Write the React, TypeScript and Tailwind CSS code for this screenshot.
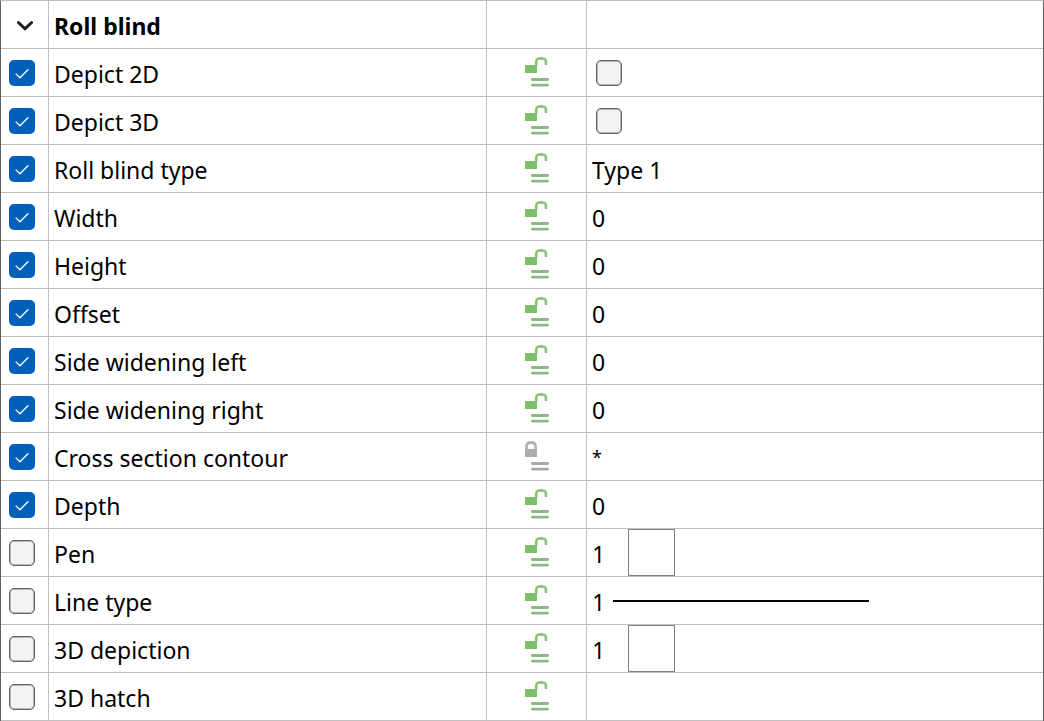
import { useState, type ReactNode } from "react";

type Property = {
    name: string;
    enabled: boolean;
    locked?: boolean;
    value: ReactNode;
};

function Checkbox({ label, defaultChecked = false }: { label: string; defaultChecked?: boolean }) {
    return (
        <span className="relative block size-[26px]">
            <input
                type="checkbox"
                aria-label={label}
                defaultChecked={defaultChecked}
                className="peer block size-full appearance-none rounded-[5px] border border-[#606060] bg-[#f3f3f3] ring-1 ring-[#606060]/40 ring-inset checked:border-0 checked:bg-[#005fb8] checked:ring-0"
            />
            <svg
                viewBox="0 0 26 26"
                className="pointer-events-none absolute inset-0 hidden peer-checked:block"
                fill="none"
                stroke="#fff"
                strokeWidth="1.3"
            >
                <path d="M6.6 13.6 11 17.8 19.4 9.3" />
            </svg>
        </span>
    );
}

function LockIcon({ locked = false }: { locked?: boolean }) {
    const lines = locked ? "#a8a8a8" : "#91b587";

    return (
        <svg width="24" height="30" viewBox="0 0 24 30" fill="none" className="block">
            {locked ? (
                <>
                    <path d="M1.5 9V5Q1.5 1.5 6 1.5T10.5 5V9" stroke="#b4b4b4" strokeWidth="2.8" />
                    <path d="M0 8h12v8H0z" fill="#acacac" />
                </>
            ) : (
                <>
                    <path d="M0 8h12v8H0z" fill="#7dc268" />
                    <path d="M11.2 9V4.5Q11.2 1.4 16 1.4" stroke="#83c470" strokeWidth="2.6" />
                    <path d="M15.5 1.4Q20.9 1.4 20.9 4.5V8" stroke="#96bd8b" strokeWidth="2.6" />
                </>
            )}
            <path d="M7.4 22.5h15.2M7.4 28.2h15.2" stroke={lines} strokeWidth="2.8" strokeLinecap="round" />
        </svg>
    );
}

function Swatch() {
    return <span className="ml-[23px] size-[47px] border border-[#808080] bg-white" />;
}

const properties: Property[] = [
    { name: "Depict 2D", enabled: true, value: <Checkbox label="Depict 2D value" /> },
    { name: "Depict 3D", enabled: true, value: <Checkbox label="Depict 3D value" /> },
    { name: "Roll blind type", enabled: true, value: "Type 1" },
    { name: "Width", enabled: true, value: "0" },
    { name: "Height", enabled: true, value: "0" },
    { name: "Offset", enabled: true, value: "0" },
    { name: "Side widening left", enabled: true, value: "0" },
    { name: "Side widening right", enabled: true, value: "0" },
    { name: "Cross section contour", enabled: true, locked: true, value: <span className="text-lg">*</span> },
    { name: "Depth", enabled: true, value: "0" },
    { name: "Pen", enabled: false, value: <><span className="pt-0.5">1</span><Swatch /></> },
    {
        name: "Line type",
        enabled: false,
        value: (
            <>
                <span className="pt-0.5">1</span>
                <span className="ml-2 h-0.5 w-64 bg-black" />
            </>
        ),
    },
    { name: "3D depiction", enabled: false, value: <><span className="pt-0.5">1</span><Swatch /></> },
    { name: "3D hatch", enabled: false, value: "" },
];

const cell = "border-b border-r border-[#c0c0c0] p-0";
const lastCell = "border-b border-[#c0c0c0] p-0";

export default function App() {
    const [open, setOpen] = useState(true);

    return (
        <table className="w-full table-fixed border-separate border-spacing-0 border-x border-t border-x-[#606060] border-t-[#c0c0c0] bg-white text-left font-['Noto_Sans',sans-serif] text-[23px] leading-8 text-black">
            <colgroup>
                <col className="w-12" />
                <col className="w-[438px]" />
                <col className="w-[100px]" />
                <col />
            </colgroup>
            <thead>
                <tr className="h-12">
                    <th className={cell}>
                        <button
                            aria-label="Toggle Roll blind"
                            aria-expanded={open}
                            onClick={() => setOpen(!open)}
                            className="flex h-[47px] w-full items-center justify-center pt-0.5"
                        >
                            <svg width="18" height="12" viewBox="0 0 18 12" fill="none" className={open ? "" : "-rotate-90"}>
                                <path d="M2.4 2.5 9 8.8 15.6 2.5" stroke="#1c1c1c" strokeWidth="3" strokeLinecap="round" />
                            </svg>
                        </button>
                    </th>
                    <th scope="col" className={cell}>
                        <div className="pt-0.5 pl-[5px] font-bold">Roll blind</div>
                    </th>
                    <td className={cell} />
                    <td className={lastCell} />
                </tr>
            </thead>
            {open && (
                <tbody>
                    {properties.map(({ name, enabled, locked, value }) => (
                        <tr key={name} className="h-12">
                            <td className={cell}>
                                <div className="pl-2">
                                    <Checkbox label={name} defaultChecked={enabled} />
                                </div>
                            </td>
                            <th scope="row" className={cell}>
                                <div className="pt-0.5 pl-[5px] font-normal">{name}</div>
                            </th>
                            <td className={cell}>
                                <div className="flex justify-center pb-0.5">
                                    <LockIcon locked={locked} />
                                </div>
                            </td>
                            <td className={lastCell}>
                                {typeof value === "string" ? (
                                    <div className="pt-0.5 pl-[5px]">{value}</div>
                                ) : (
                                    <div className={name.startsWith("Depict") ? "pl-[9px]" : "flex h-[47px] items-center pl-[5px]"}>
                                        {value}
                                    </div>
                                )}
                            </td>
                        </tr>
                    ))}
                </tbody>
            )}
        </table>
    );
}
